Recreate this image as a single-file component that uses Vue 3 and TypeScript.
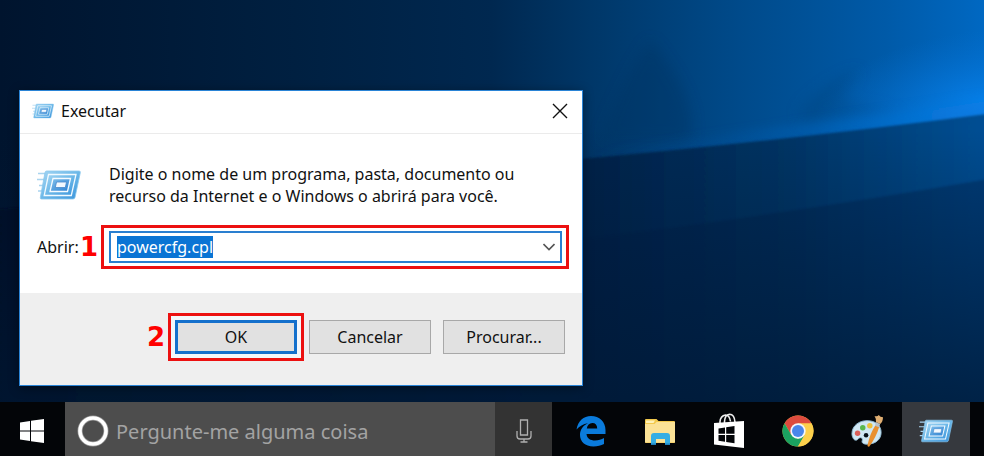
<script setup lang="ts">
import { onMounted, ref } from 'vue'

const command = ref('powercfg.cpl')
const query = ref('')
const commandInput = ref<HTMLInputElement | null>(null)

onMounted(() => {
  commandInput.value?.focus()
  commandInput.value?.select()
})
</script>

<template>
  <div class="screen">
    <svg class="wallpaper" viewBox="0 0 984 456" preserveAspectRatio="none" aria-hidden="true">
      <defs>
        <linearGradient id="base" x1="0" y1="0" x2="1" y2="0">
          <stop offset="0" stop-color="#00142e" />
          <stop offset=".3" stop-color="#002041" />
          <stop offset=".5" stop-color="#002850" />
          <stop offset=".6" stop-color="#003768" />
          <stop offset=".75" stop-color="#004a8a" />
          <stop offset=".9" stop-color="#005aa8" />
          <stop offset="1" stop-color="#0068c2" />
        </linearGradient>
        <radialGradient id="glow" gradientUnits="userSpaceOnUse" cx="0" cy="0" r="1" gradientTransform="translate(984 100) rotate(-7) scale(170 70)">
          <stop offset="0" stop-color="#0780ea" stop-opacity=".9" />
          <stop offset="1" stop-color="#0670d2" stop-opacity="0" />
        </radialGradient>
        <linearGradient id="beam" x1="0" y1="0" x2="1" y2="0">
          <stop offset="0" stop-color="#0068c4" stop-opacity="0" />
          <stop offset=".5" stop-color="#0068c4" stop-opacity=".8" />
          <stop offset="1" stop-color="#0a80ea" />
        </linearGradient>
        <linearGradient id="floor" x1="0" y1="0" x2="1" y2="0">
          <stop offset="0" stop-color="#010f24" />
          <stop offset=".6" stop-color="#002249" />
          <stop offset=".8" stop-color="#003566" />
          <stop offset="1" stop-color="#005096" />
        </linearGradient>
        <linearGradient id="shade" x1="0" y1="0" x2="0" y2="1">
          <stop offset="0" stop-color="#001833" stop-opacity="0" />
          <stop offset="1" stop-color="#001833" stop-opacity=".85" />
        </linearGradient>
        <filter id="edge"><feGaussianBlur stdDeviation="1" /></filter>
        <filter id="haze" x="-20%" y="-50%" width="140%" height="200%"><feGaussianBlur stdDeviation="7" /></filter>
      </defs>
      <rect width="984" height="456" fill="url(#base)" />
      <path d="M650 40Q625 75 600 140H690Q700 100 650 40Z" fill="#00305f" opacity=".35" filter="url(#haze)" />
      <path d="M800 110Q820 85 860 70L840 100 900 112 800 122Z" fill="#004684" opacity=".5" filter="url(#haze)" />
      <rect width="984" height="200" fill="url(#glow)" />
      <path d="M590 156Q780 132 994 100V116Q780 140 590 162Z" fill="url(#beam)" opacity=".8" filter="url(#haze)" />
      <path d="M-10 210 580 159Q780 141 994 113V466H-10Z" fill="url(#floor)" filter="url(#edge)" />
      <path d="M580 240Q800 212 994 178V466H580Z" fill="#001c44" opacity=".35" filter="url(#edge)" />
      <rect y="130" width="984" height="326" fill="url(#shade)" />
    </svg>

    <svg class="sprites" aria-hidden="true">
      <defs>
        <linearGradient id="runFill" x1="0" y1="0" x2="1" y2="1">
          <stop offset="0" stop-color="#a5d6f3" />
          <stop offset=".5" stop-color="#6cb8e8" />
          <stop offset="1" stop-color="#3a94dc" />
        </linearGradient>
        <linearGradient id="runCore" x1="0" y1="0" x2="1" y2="1">
          <stop offset="0" stop-color="#83c2ec" />
          <stop offset="1" stop-color="#2b80d2" />
        </linearGradient>
        <symbol id="run" viewBox="0 0 44 30">
          <path d="M1 3.500h9M0 9.500h8M2 15.500h5M1 21h5" stroke="#a9d4ef" stroke-width="1.500" />
          <path d="M9.500 1h32.500q1.700 0 1.300 1.700L38 27.500q-.5 1.500-2 1.500H4.500Q3 29 3.300 27.500L8 2.500Q8.300 1 9.500 1Z" fill="url(#runFill)" stroke="#8ac8ee" stroke-width=".8" />
          <path d="M11.500 4.500h27.500L34.300 25.500H7.200Z" fill="url(#runFill)" stroke="#f2faff" stroke-width="1.300" />
          <path d="M16 8.500h17.500L30.500 21.500h-17.500Z" fill="url(#runCore)" stroke="#f6fbff" stroke-width="1.300" />
          <path d="M19.500 12h10l-1.200 5.500h-10Z" fill="#f3f9ff" stroke="#4688cc" stroke-width=".8" />
        </symbol>
      </defs>
    </svg>

    <main class="desktop">
      <section class="dialog" role="dialog" aria-labelledby="dialog-title">
        <header class="titlebar">
          <svg class="title-icon"><use href="#run" /></svg>
          <h1 id="dialog-title">Executar</h1>
          <button class="close" type="button" aria-label="Fechar">
            <svg viewBox="0 0 16 16"><path d="m1 1 14 14M15 1 1 15" fill="none" stroke="#111" stroke-width="1.400" /></svg>
          </button>
        </header>
        <div class="body">
          <div class="intro">
            <svg class="intro-icon"><use href="#run" /></svg>
            <p>Digite o nome de um programa, pasta, documento ou recurso da Internet e o Windows o abrirá para você.</p>
          </div>
          <div class="field">
            <label for="command">Abrir:</label>
            <span class="step">1</span>
            <div class="mark mark-field">
              <div class="combo">
                <input id="command" ref="commandInput" v-model="command" type="text" spellcheck="false" autocomplete="off" />
                <button type="button" aria-label="Mostrar histórico">
                  <svg viewBox="0 0 12 8"><path d="m.5 1 5.500 5.500L11.500 1" fill="none" stroke="#555" stroke-width="1.600" /></svg>
                </button>
              </div>
            </div>
          </div>
        </div>
        <footer class="actions">
          <span class="step">2</span>
          <div class="mark mark-ok"><button class="action primary" type="button">OK</button></div>
          <button class="action" type="button">Cancelar</button>
          <button class="action last" type="button">Procurar...</button>
        </footer>
      </section>
    </main>

    <nav class="taskbar">
      <button class="start" type="button" aria-label="Iniciar">
        <svg viewBox="0 0 24 24"><path d="M0 3.500 10 2v9.500H0ZM11 1.800 24 0v11.500H11ZM0 12.500h10V22L0 20.500ZM11 12.500h13V24L11 22.200Z" fill="#fff" /></svg>
      </button>
      <div class="search">
        <svg class="cortana" viewBox="0 0 32 32" aria-hidden="true"><circle cx="16" cy="16" r="13" fill="none" stroke="#999" stroke-width="5" /><circle cx="16" cy="16" r="13" fill="none" stroke="#fff" stroke-width="3.600" /></svg>
        <input v-model="query" type="text" aria-label="Pesquisar" placeholder="Pergunte-me alguma coisa" />
      </div>
      <button class="mic" type="button" aria-label="Falar">
        <svg viewBox="0 0 16 24"><path d="M4.500 1h7v15h-7ZM1 12v5q0 3 3 3h8q3 0 3-3v-5M8 20v3M4.500 23h7" fill="none" stroke="#b0b0b0" stroke-width="1.300" /></svg>
      </button>
      <div class="apps">
        <button type="button" aria-label="Microsoft Edge">
          <svg viewBox="0 0 32 32"><path d="M1.500 14.500C3 6 8.500 1 16 1c8.500 0 14.500 6 14.500 14v4H11.500c.4 4.500 4 6.500 8.500 6.500 3.500 0 6.500-1 9-2.500v6c-3 1.600-6.500 2.400-10.500 2.400C10 31.400 5 26.500 5 20c0-5.500 3-9.500 8-11.800-5 .6-8.500 3-11.500 6.300ZM11.800 13.500h10.400c0-3.500-1.700-5.500-4.900-5.500-3 0-5 2.200-5.500 5.500Z" fill="#0a7bdc" /></svg>
        </button>
        <button type="button" aria-label="Explorador de Arquivos">
          <svg viewBox="0 0 32 32"><path d="M1 5q0-1 1-1h10.500l2 2H30q1 0 1 1v20q0 1-1 1H2q-1 0-1-1Z" fill="#f2c94d" /><path d="M2 5.500h9L9.500 8H2Z" fill="#fff1b5" /><path d="M1 9h9.500l2-2H31v20.500H1Z" fill="#fbe296" /><path d="M7 30V21q0-3 3-3h13q3 0 3 3v9h-5v-6h-9v6Z" fill="#35aee5" /><path d="M7 28.500h5V30H7Zm14 0h5V30h-5Z" fill="#1e82be" /></svg>
        </button>
        <button type="button" aria-label="Loja">
          <svg viewBox="0 0 32 36"><path d="M7 11V8.500Q7.500 3 12.500 2q4 0 5 6.500M11.500 11V8.500Q12 1.500 16.500 1.200q5 0 5.500 8" fill="none" stroke="#eee" stroke-width="1.600" /><path d="M1 10 31 8v27L1 31.500Z" fill="#fff" /><path d="m5.500 15.500 6.500-1v6.200H5.500ZM13.200 14.300l8.300-1.300v7.700h-8.300ZM5.500 22H12v6.700l-6.500-.9ZM13.200 22h8.300v8.200l-8.300-1.300Z" fill="#030508" /></svg>
        </button>
        <button type="button" aria-label="Google Chrome">
          <svg viewBox="0 0 32 32"><circle cx="16" cy="16" r="15.500" fill="#fcd04b" /><path d="M16 16 9.300 19.900 2.600 8.200A15.500 15.500 0 0 1 29.400 8.200Z" fill="#dd4b3e" /><path d="M2.600 8.200 9.300 19.900 16 23.700 22.700 19.900 16 31.500A15.500 15.500 0 0 1 2.600 8.200Z" fill="#1ba260" /><path d="M16 8.300h13.500A15.500 15.500 0 0 1 16 31.500l6.700-11.600Z" fill="#fcd04b" /><circle cx="16" cy="16" r="7.700" fill="#f3f6fc" /><circle cx="16" cy="16" r="6" fill="#4a86ea" /></svg>
        </button>
        <button type="button" aria-label="Paint">
          <svg viewBox="0 0 34 34"><path d="M1 20C1 11 9 6 17 6c9 0 15 5 15 12.500C32 26 26 31 17 31c-4 0-6-1.500-5-4 .8-3-2.500-4-4.500-1.500-1.500 2-4 1.500-5-.5S1 22 1 20Z" fill="#cfe7f4" stroke="#91bdd5" /><circle cx="16" cy="21.500" r="2.400" fill="#071018" /><circle cx="7" cy="19.500" r="2.900" fill="#d9605a" /><circle cx="12.500" cy="13.500" r="2.900" fill="#58b84d" /><circle cx="20" cy="11.500" r="2.900" fill="#edc13b" /><path d="m26 11 4 1.500Q27 23 19.500 33.500q-2 .5-2-1Q20 20 26 11Z" fill="#e9902f" /><path d="m26.500 7.500 4.500 2-1.200 3.500-4.300-1.500Z" fill="#b8c0c7" /><path d="M25 1q3 1 4.500-1 1.500 2.500 4.500 2.500 0 5-3 7L26.500 7.500Q27 4 25 1Z" fill="#dfae72" /></svg>
        </button>
        <button class="active" type="button" aria-label="Executar">
          <svg class="run-app"><use href="#run" /></svg>
        </button>
      </div>
    </nav>
  </div>
</template>

<style>
body {
  margin: 0;
}
</style>

<style scoped>
* {
  box-sizing: border-box;
}
.screen {
  position: relative;
  isolation: isolate;
  display: flex;
  flex-direction: column;
  min-height: 100vh;
  font-family: "Noto Sans", "Open Sans", sans-serif;
  font-size: 16px;
  line-height: 22px;
  color: #111;
}
.wallpaper {
  position: absolute;
  inset: 0;
  z-index: -1;
  width: 100%;
  height: 100%;
}
.sprites {
  position: absolute;
  width: 0;
  height: 0;
}
button,
input {
  margin: 0;
  padding: 0;
  border: 0;
  font: inherit;
  color: inherit;
  background: transparent;
  outline: none;
}
button {
  display: flex;
  align-items: center;
  justify-content: center;
}
.desktop {
  flex: 1;
  padding: 90px 19px 16px;
}
.dialog {
  max-width: 564px;
  background: #fff;
  border: 1px solid #2a84d6;
  box-shadow: 0 2px 10px rgb(0 0 0 / 40%);
}
.titlebar {
  display: flex;
  align-items: center;
  gap: 7px;
  height: 43px;
  padding: 0 13px 2px 12px;
  border-bottom: 1px solid #ebebeb;
}
.title-icon {
  width: 22px;
  height: 16px;
}
h1 {
  flex: 1;
  margin: 0;
  font-size: 16px;
  font-weight: 400;
}
.close {
  width: 18px;
  height: 24px;
}
.close svg {
  width: 16px;
  height: 16px;
}
.body {
  padding: 29px 13px 24px 17px;
}
.intro {
  display: flex;
  align-items: center;
  gap: 28px;
}
.intro-icon {
  flex: none;
  width: 44px;
  height: 30px;
}
p {
  max-width: 420px;
  margin: 0;
}
.field {
  display: flex;
  align-items: center;
  margin-top: 18px;
}
.field label {
  width: 43px;
}
.step {
  width: 21px;
  font: 700 26px/26px "DejaVu Sans", sans-serif;
  color: #f00;
}
.mark {
  border: 3px solid #ec1010;
}
.mark-field {
  flex: 1;
  padding: 3px 4px 3px 5px;
  background: #fff;
}
.combo {
  display: flex;
  height: 32px;
  border: 2px solid #2a7fd0;
}
.combo input {
  flex: 1;
  min-width: 0;
  padding: 0 6px;
}
.combo input::selection {
  color: #fff;
  background: #0a74d4;
}
.combo button {
  width: 22px;
}
.combo button svg {
  width: 12px;
  height: 8px;
}
.actions {
  display: flex;
  align-items: center;
  justify-content: flex-end;
  padding: 20px 17px 24px;
  background: #efefef;
}
.mark-ok {
  margin-right: 5px;
  padding: 4px;
  background: #f3f7fb;
}
.action {
  width: 122px;
  height: 34px;
  border: 1px solid #a8a8a8;
  background: #e1e1e1;
}
.primary {
  border: 3px solid #1470cc;
}
.last {
  margin-left: 12px;
}
.taskbar {
  display: flex;
  height: 54px;
  background: #030508;
}
.taskbar button,
.search {
  padding-top: 4px;
}
.start {
  flex: none;
  width: 63px;
  margin-right: 2px;
}
.start svg {
  width: 24px;
  height: 24px;
}
.search {
  display: flex;
  flex: 0 1 430px;
  align-items: center;
  gap: 7px;
  min-width: 0;
  padding-right: 12px;
  padding-left: 12px;
  background: #4d4d4d;
}
.cortana {
  flex: none;
  width: 32px;
  height: 32px;
}
.search input {
  flex: 1;
  min-width: 0;
  height: 32px;
  font-size: 20px;
  line-height: 30px;
}
.search input::placeholder {
  color: #a3a3a3;
  opacity: 1;
}
.mic {
  flex: none;
  width: 57px;
  background: #333;
}
.mic svg {
  width: 16px;
  height: 24px;
}
.apps {
  display: flex;
  gap: 1px;
  margin-left: 5px;
}
.apps button {
  width: 68px;
}
.apps svg {
  width: 32px;
  height: 36px;
}
.apps .active {
  background: #36393e;
}
.apps .run-app {
  width: 34px;
  height: 24px;
}
</style>
